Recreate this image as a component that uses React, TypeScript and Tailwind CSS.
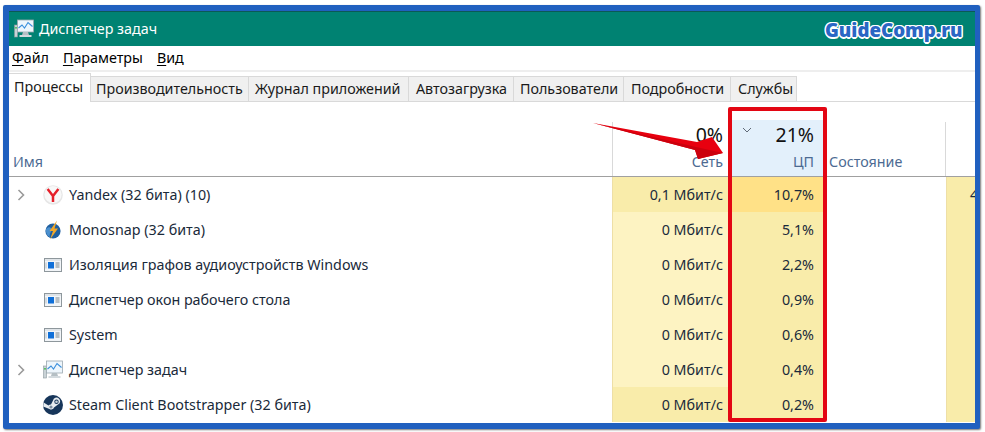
const rows = [
  { name: "Yandex (32 бита) (10)", icon: "yandex", exp: true, net: "0,1 Мбит/с", cpu: "10,7%", netBg: "bg-[#f9ecaa]", cpuBg: "bg-[#ffe187]" },
  { name: "Monosnap (32 бита)", icon: "mono", exp: false, net: "0 Мбит/с", cpu: "5,1%", netBg: "bg-[#fdf3c2]", cpuBg: "bg-[#f9ecaa]" },
  { name: "Изоляция графов аудиоустройств Windows", icon: "win", exp: false, net: "0 Мбит/с", cpu: "2,2%", netBg: "bg-[#fdf3c2]", cpuBg: "bg-[#f9ecaa]" },
  { name: "Диспетчер окон рабочего стола", icon: "win", exp: false, net: "0 Мбит/с", cpu: "0,9%", netBg: "bg-[#fdf3c2]", cpuBg: "bg-[#f9ecaa]" },
  { name: "System", icon: "win", exp: false, net: "0 Мбит/с", cpu: "0,6%", netBg: "bg-[#fdf3c2]", cpuBg: "bg-[#f9ecaa]" },
  { name: "Диспетчер задач", icon: "task", exp: true, net: "0 Мбит/с", cpu: "0,4%", netBg: "bg-[#fdf3c2]", cpuBg: "bg-[#f9ecaa]" },
  { name: "Steam Client Bootstrapper (32 бита)", icon: "steam", exp: false, net: "0 Мбит/с", cpu: "0,2%", netBg: "bg-[#f9ecaa]", cpuBg: "bg-[#f9ecaa]" },
];

function TaskIcon({ className }: { className?: string }) {
  return (
    <svg viewBox="0 0 20 20" className={className}>
      <rect x="0.5" y="6" width="3" height="12" fill="#c9d2d6" stroke="#8d9a9e" strokeWidth="0.6" />
      <rect x="1.2" y="8" width="1.6" height="1.6" fill="#3fbf4a" />
      <rect x="3.5" y="1" width="16" height="12" fill="#eef6fc" stroke="#9aa7ae" strokeWidth="0.8" />
      <path d="M4.5 9 L8 6 L10.5 9 L14 3.5 L18.5 7.5" fill="none" stroke="#3a8fdc" strokeWidth="1.1" />
      <path d="M9 13 L14 13 L15 16 L8 16 Z" fill="#b5bfc4" />
      <rect x="5.5" y="16" width="12" height="2" fill="#d3dade" />
    </svg>
  );
}

function WinIcon() {
  return (
    <svg viewBox="0 0 18 14" className="w-[18px] h-[14px]">
      <rect x="0.5" y="0.5" width="17" height="13" fill="#f2f5f8" stroke="#8e979c" />
      <rect x="1" y="1" width="16" height="2" fill="#dfe4e8" />
      <rect x="4" y="4" width="6" height="6.5" fill="#0f6fd8" />
      <path d="M11.5 5 H15.5 M11.5 7 H15.5 M11.5 9 H15.5" stroke="#7a868d" strokeWidth="1" />
      <path d="M2 4.5 V10.5" stroke="#b8c0c5" strokeWidth="1" />
    </svg>
  );
}

function RowIcon({ type }: { type: string }) {
  if (type === "yandex")
    return (
      <svg viewBox="0 0 20 20" className="w-5 h-5">
        <circle cx="10" cy="10" r="9.8" fill="#e6e6e6" />
        <circle cx="10" cy="9.5" r="8.6" fill="#f8f8f8" />
        <path d="M4.6 4 L10 11 L15.4 4 M10 11 V17" fill="none" stroke="#e5202a" strokeWidth="2.5" />
      </svg>
    );
  if (type === "mono")
    return (
      <svg viewBox="0 0 20 20" className="w-5 h-5">
        <circle cx="10" cy="11" r="7.6" fill="#1f5f9f" />
        <path d="M3 9 C6 6 8 7 9 10 C7 13 6 15 7 17 C4.5 16 2.5 13 3 9 Z" fill="#4a8fce" />
        <path d="M14 0.5 L6.5 11 L10 11 L7 19.5 L15 8.5 L11.5 8.5 Z" fill="#f0a72a" />
      </svg>
    );
  if (type === "task") return <TaskIcon className="w-5 h-5" />;
  if (type === "steam")
    return (
      <svg viewBox="0 0 20 20" className="w-5 h-5">
        <circle cx="10" cy="10" r="10" fill="#17365a" />
        <path d="M0.2 11.5 L6.5 14 A3 3 0 0 0 11 12.5 L15 9.5 A3.6 3.6 0 1 0 10 5.5 L8 9.5 A3 3 0 0 0 5.5 10.5 L0.6 7.5 Z" fill="#e8edf1" />
        <circle cx="13.5" cy="6.8" r="2.2" fill="#17365a" />
        <circle cx="13.5" cy="6.8" r="1.3" fill="#c6d1da" />
        <circle cx="8" cy="12" r="1.6" fill="#7d8fa1" />
      </svg>
    );
  return <WinIcon />;
}

function Chevron() {
  return (
    <svg viewBox="0 0 8 12" className="w-2 h-3">
      <path d="M1.5 1 L6.5 6 L1.5 11" fill="none" stroke="#9a9a9a" strokeWidth="1.6" />
    </svg>
  );
}

function U({ children }: { children: string }) {
  return <span className="underline underline-offset-2">{children}</span>;
}

const tabs = [
  { t: "Производительность", w: "w-[158px]", p: "pl-[5px]" },
  { t: "Журнал приложений", w: "w-[160px]", p: "pl-[6px]" },
  { t: "Автозагрузка", w: "w-[105px]", p: "pl-[7px]" },
  { t: "Пользователи", w: "w-[110px]", p: "pl-[6px]" },
  { t: "Подробности", w: "w-[107px]", p: "pl-[7px]" },
  { t: "Службы", w: "w-[66px]", p: "pl-[7px]" },
];

export default function App() {
  return (
    <div className="relative w-[985px] h-[432px] overflow-hidden bg-white pl-[3px] pt-[5px] font-['Noto_Sans',sans-serif] text-[14.3px] text-[#1a1a1a]">
      <div className="w-[977px] h-[424px] flex flex-col overflow-hidden rounded-[2px] border-t-[6px] border-l-[6px] border-b-[6px] border-r-[5px] border-[#2060bf] bg-white shadow-[1px_1px_2px_#777]">
        <div className="h-[35px] shrink-0 bg-[#008272] flex items-center pl-[5px] gap-[5px] text-white border-t border-[#0a5a55]">
          <TaskIcon className="w-5 h-5" />
          <span>Диспетчер задач</span>
        </div>
        <div className="h-[23px] shrink-0 flex items-center pl-[3px] gap-[14px] text-black">
          <span><U>Ф</U>айл</span>
          <span><U>П</U>араметры</span>
          <span><U>В</U>ид</span>
        </div>
        <div className="h-[2px] shrink-0 mt-px bg-[#eeeeee]" />
        <div className="h-[30px] shrink-0 flex items-end border-b border-[#d9d9d9]">
          <div className="h-[29px] -mb-px pl-[5px] w-[82px] bg-white border-t border-r border-[#d9d9d9] pt-[2px]">Процессы</div>
          {tabs.map(({ t, w, p }) => (
            <div key={t} className={`h-[25px] flex items-center whitespace-nowrap bg-[#f0f0f0] border-r border-[#d9d9d9] border-t ${w} ${p}`}>
              {t}
            </div>
          ))}
        </div>
        <div className="h-[75px] shrink-0 flex border-b border-[#a0a0a0] text-[#4c6a92]">
          <div className="w-[603px] flex items-end pl-[4px] pb-[4px]">Имя</div>
          <div className="w-[120px] mt-[20px] flex flex-col items-end justify-end pr-[9px] pb-[4px] border-l border-[#d9d9d9]">
            <span className="text-[19.5px] leading-[24px] text-[#111]">0%</span>
            <span className="mt-[4px]">Сеть</span>
          </div>
          <div className="relative w-[91px] mt-[18px] flex flex-col items-end justify-end pr-[9px] pb-[4px] bg-[#e3f0fb]">
            <svg viewBox="0 0 10 6" className="absolute left-[10px] top-[7px] w-[10px] h-[6px]">
              <path d="M1 1 L5 5 L9 1" fill="none" stroke="#606a78" strokeWidth="1" />
            </svg>
            <span className="text-[19.5px] leading-[24px] text-[#111]">21%</span>
            <span className="mt-[4px]">ЦП</span>
          </div>
          <div className="w-[123px] mt-[20px] flex items-end pl-[6px] pb-[4px] border-r border-[#d9d9d9]">Состояние</div>
          <div className="flex-1" />
        </div>
        <div className="flex-1 min-h-0 overflow-hidden">
          {rows.map((r) => (
            <div key={r.name} className="h-[35px] flex items-stretch text-[#1a2a3a]">
              <div className="w-[603px] flex items-center">
                <div className="w-[32px] pl-[8px] flex items-center">{r.exp && <Chevron />}</div>
                <div className="w-[28px] flex justify-center pr-[4px]"><RowIcon type={r.icon} /></div>
                <span className="whitespace-nowrap">{r.name}</span>
              </div>
              <div className={`w-[120px] flex items-center justify-end pr-[9px] border-l border-[#eedfa6] ${r.netBg}`}>{r.net}</div>
              <div className={`w-[91px] flex items-center justify-end pr-[9px] ${r.cpuBg}`}>{r.cpu}</div>
              <div className="w-[123px] bg-white" />
              <div className="flex-1 bg-[#f9ecaa] border-l border-[#eedfa6] pl-[23px] overflow-hidden">
                {r.icon === "yandex" && <span className="leading-[35px]">4</span>}
              </div>
            </div>
          ))}
        </div>
      </div>

      <div className="absolute left-[728px] top-[107px] w-[99px] h-[315px] border-[4px] border-[#e30613] rounded-[2px]" />

      <svg viewBox="0 0 140 50" className="absolute left-[590px] top-[118px] w-[140px] h-[50px]">
        <path d="M3 5 L107 24 L122 19 L133 35 L108 41 L105 32 Z" fill="#e8000f" />
        <path d="M3 5 L106 29 L133 35 L108 41 L105 32 Z" fill="#cc000d" />
      </svg>

      <div className="absolute left-[825px] top-[15px] font-['Open_Sans',sans-serif] font-extrabold text-[18.7px] leading-[30px] text-[#2a66c4] [text-shadow:1.5px_0_0_#fff,-1.5px_0_0_#fff,0_1.5px_0_#fff,0_-1.5px_0_#fff,1px_1px_0_#fff,-1px_-1px_0_#fff,1px_-1px_0_#fff,-1px_1px_0_#fff]">
        GuideComp.ru
      </div>
    </div>
  );
}
